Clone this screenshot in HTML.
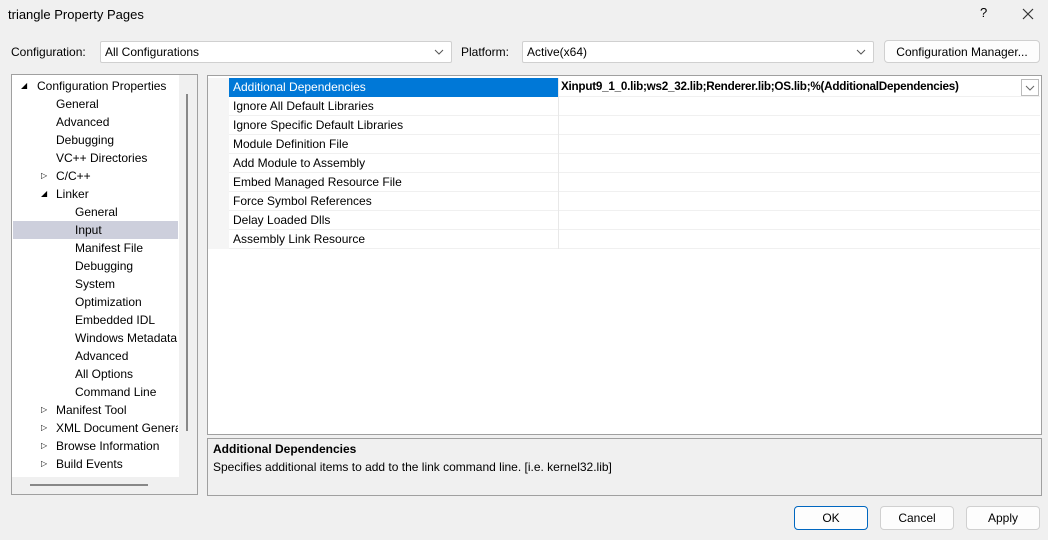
<!DOCTYPE html>
<html><head><style>
*{box-sizing:border-box;margin:0;padding:0}
body{width:1048px;height:540px;background:#f0f0f0;font-family:"Liberation Sans",sans-serif;font-size:12px;color:#000;position:relative;overflow:hidden}
.a{position:absolute;white-space:nowrap}
.combo{position:absolute;background:#fff;border:1px solid #d0d0d0;border-radius:2px;height:22px;padding:3px 4px;}
.chev{position:absolute;right:6px;top:4px;width:12px;height:12px}
.btn{position:absolute;background:#fdfdfd;border:1px solid #d0d0d0;border-radius:4px;text-align:center;line-height:22px}
.tree div{position:absolute;height:18px;line-height:18px;white-space:nowrap}
.tri{position:absolute;font-size:8px}
.row{position:absolute;left:229px;width:811px;height:19px;border-bottom:1px solid #f0f0f0;line-height:18px}
.row span{position:absolute;left:4px}
.row i{position:absolute;left:329px;top:0;height:19px;border-left:1px solid #e8e8e8}
</style></head><body>
<div class="a" style="left:8px;top:7px;font-size:13px">triangle Property Pages</div>
<div class="a" style="left:980px;top:5px;font-size:13px">?</div>
<svg class="a" style="left:1022px;top:8px" width="12" height="12"><path d="M1 1L11 11M11 1L1 11" stroke="#333" stroke-width="1.2"/></svg>

<div class="a" style="left:11px;top:45px">Configuration:</div>
<div class="combo" style="left:100px;top:41px;width:352px">All Configurations<svg class="chev" viewBox="0 0 12 12"><path d="M2 4L6 8L10 4" fill="none" stroke="#555"/></svg></div>
<div class="a" style="left:461px;top:45px">Platform:</div>
<div class="combo" style="left:522px;top:41px;width:352px">Active(x64)<svg class="chev" viewBox="0 0 12 12"><path d="M2 4L6 8L10 4" fill="none" stroke="#555"/></svg></div>
<div class="btn" style="left:884px;top:40px;width:156px;height:23px">Configuration Manager...</div>

<!-- tree -->
<div class="a" style="left:11px;top:74px;width:187px;height:421px;border:1px solid #a0a0a0;background:#f0f0f0"></div>
<div class="a" style="left:12px;top:75px;width:167px;height:402px;background:#fff"></div>
<div class="a" style="left:186px;top:94px;width:2px;height:337px;background:#888"></div>
<div class="a" style="left:30px;top:484px;width:118px;height:2px;background:#888"></div>
<div class="a" style="left:13px;top:221px;width:165px;height:18px;background:#cdcfdc"></div>
<div class="tree">
<div class="tri" style="left:21px;top:77px">◢</div>
<div style="left:37px;top:77px">Configuration Properties</div>
<div style="left:56px;top:95px">General</div>
<div style="left:56px;top:113px">Advanced</div>
<div style="left:56px;top:131px">Debugging</div>
<div style="left:56px;top:149px">VC++ Directories</div>
<div class="tri" style="left:41px;top:167px">▷</div>
<div style="left:56px;top:167px">C/C++</div>
<div class="tri" style="left:41px;top:185px">◢</div>
<div style="left:56px;top:185px">Linker</div>
<div style="left:75px;top:203px">General</div>
<div style="left:75px;top:221px">Input</div>
<div style="left:75px;top:239px">Manifest File</div>
<div style="left:75px;top:257px">Debugging</div>
<div style="left:75px;top:275px">System</div>
<div style="left:75px;top:293px">Optimization</div>
<div style="left:75px;top:311px">Embedded IDL</div>
<div style="left:75px;top:329px;width:103px;overflow:hidden">Windows Metadata</div>
<div style="left:75px;top:347px">Advanced</div>
<div style="left:75px;top:365px">All Options</div>
<div style="left:75px;top:383px">Command Line</div>
<div class="tri" style="left:41px;top:401px">▷</div>
<div style="left:56px;top:401px">Manifest Tool</div>
<div class="tri" style="left:41px;top:419px">▷</div>
<div style="left:56px;top:419px;width:122px;overflow:hidden">XML Document Generator</div>
<div class="tri" style="left:41px;top:437px">▷</div>
<div style="left:56px;top:437px">Browse Information</div>
<div class="tri" style="left:41px;top:455px">▷</div>
<div style="left:56px;top:455px">Build Events</div>
</div>

<!-- grid -->
<div class="a" style="left:207px;top:75px;width:835px;height:360px;border:1px solid #a0a0a0;background:#fff"></div>
<div class="a" style="left:208px;top:78px;width:21px;height:171px;background:#f5f5f5"></div>
<div class="row" style="top:78px;"><div class="a" style="left:0;top:0;width:329px;height:19px;background:#0078d7"></div><span style="color:#fff">Additional Dependencies</span><i></i><b class="a" style="left:332px;top:0;font-size:11.7px;letter-spacing:-0.25px">Xinput9_1_0.lib;ws2_32.lib;Renderer.lib;OS.lib;%(AdditionalDependencies)</b>
<div class="a" style="left:792px;top:1px;width:18px;height:17px;border:1px solid #bbb;background:#fff"><svg style="position:absolute;left:3px;top:3px" width="10" height="10"><path d="M1 3L5 7L9 3" fill="none" stroke="#666"/></svg></div></div>
<div class="row" style="top:97px"><span>Ignore All Default Libraries</span><i></i></div>
<div class="row" style="top:116px"><span>Ignore Specific Default Libraries</span><i></i></div>
<div class="row" style="top:135px"><span>Module Definition File</span><i></i></div>
<div class="row" style="top:154px"><span>Add Module to Assembly</span><i></i></div>
<div class="row" style="top:173px"><span>Embed Managed Resource File</span><i></i></div>
<div class="row" style="top:192px"><span>Force Symbol References</span><i></i></div>
<div class="row" style="top:211px"><span>Delay Loaded Dlls</span><i></i></div>
<div class="row" style="top:230px"><span>Assembly Link Resource</span><i></i></div>

<!-- description -->
<div class="a" style="left:207px;top:438px;width:835px;height:58px;border:1px solid #a0a0a0"></div>
<div class="a" style="left:213px;top:442px;font-weight:bold">Additional Dependencies</div>
<div class="a" style="left:213px;top:460px">Specifies additional items to add to the link command line. [i.e. kernel32.lib]</div>

<div class="btn" style="left:794px;top:506px;width:74px;height:24px;border:1px solid #0067c0">OK</div>
<div class="btn" style="left:880px;top:506px;width:74px;height:24px">Cancel</div>
<div class="btn" style="left:966px;top:506px;width:74px;height:24px">Apply</div>
</body></html>
